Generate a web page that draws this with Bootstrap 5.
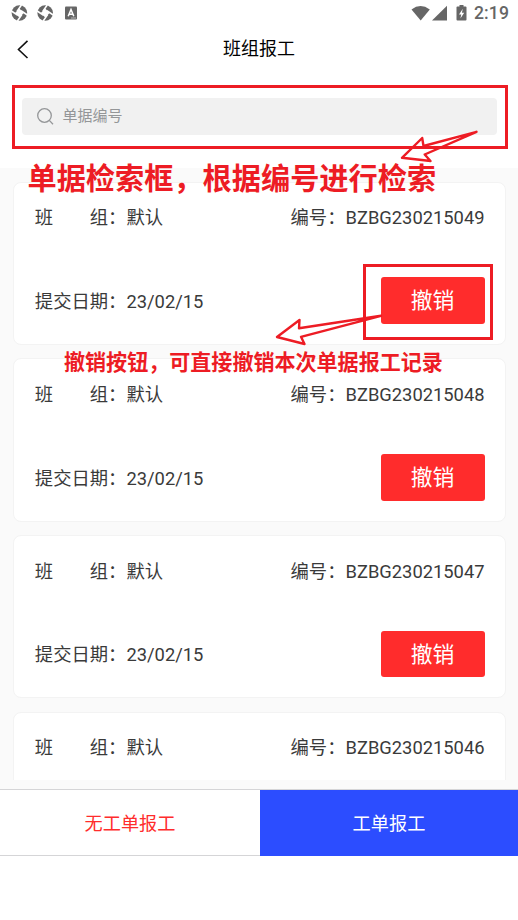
<!DOCTYPE html>
<html lang="zh-CN">
<head>
<meta charset="utf-8">
<meta name="viewport" content="width=device-width, initial-scale=1">
<title>班组报工</title>
<link href="https://cdn.jsdelivr.net/npm/bootstrap@5.3.0/dist/css/bootstrap.min.css" rel="stylesheet">
<style>
body { font-family: Roboto, "Noto Sans CJK SC", sans-serif; color: #3a3a3a; width: 518px; height: 920px; overflow: hidden; background: #fff; }
.status-row { height: 27px; padding: 0 9px 0 11px; color: #666; }
.clock { font-size: 17.6px; font-weight: 500; line-height: 27px; letter-spacing: .1px; }
.title-row { height: 43px; padding-left: 15.5px; }
.title-row h1 { font-size: 18px; font-weight: 400; color: #000; line-height: 45px; padding-right: 29.5px; }
.search-row { height: 98px; padding: 28px 21px 0 22px; }
.search-field { height: 37px; background: #f1f1f1; border-radius: 4px; padding-left: 14px; gap: 7.5px; color: #949698; font-size: 15px; line-height: 36px; }
.search-field span { padding-bottom: 2px; }
.list-area { height: 622px; background: #fafafa; padding: 13.5px 12px 0 13px; border-bottom: 1px solid #d5d5d7; }
.list-clip { height: 598.5px; overflow: hidden; }
.report-card { height: 163.3px; margin-bottom: 13.5px; border: 1px solid #f3f3f3; border-radius: 8px; padding: 21.5px 20.5px 20px 20.8px; font-size: 18.33px; line-height: 28px; }
.field-date { padding-bottom: 8px; }
.btn-revoke { width: 104px; height: 46.5px; background: #ff2c2c; color: #fff; border: 0; border-radius: 3px; font-size: 21.8px; line-height: 47px; padding: 0; }
.btn-revoke:hover { background: #e52020; color: #fff; }
.action-row { height: 66px; font-size: 18.2px; }
.action-row .btn { border-radius: 0; border: 0; font-size: inherit; padding: 2px 0 0; }
.btn-plain { width: 260px; color: #ff2c2c; box-shadow: inset 0 -1px #d5d5d7; }
.btn-order { background: #2c4dff; color: #fff; }
.note-layer { color: #ed1c24; pointer-events: none; }
.note { position: absolute; font-weight: 700; white-space: nowrap; line-height: 1; }
.note-search { left: 27.5px; top: 165px; font-size: 29.2px; }
.note-revoke { left: 64px; top: 352px; font-size: 21.05px; }
</style>
<script src="https://cdn.jsdelivr.net/npm/bootstrap@5.3.0/dist/js/bootstrap.bundle.min.js"></script>
</head>
<body class="position-relative">
<header>
  <div class="status-row d-flex align-items-center justify-content-between">
    <svg width="68" height="18" viewBox="0 0 68 18">
      <defs><g id="swirl"><circle cx="8" cy="8" r="7.8" fill="#666"/><path d="M8 3.6 12.4 8 8 12.4 3.6 8Z" fill="#fff"/><path d="M5.6 6.4 10 0M9.6 5.6 16 10M10.4 9.6 6 16M6.4 10.4 0 6" stroke="#fff" stroke-width="1.6" fill="none"/></g></defs>
      <use href="#swirl" x="0.4" y="0"/><use href="#swirl" x="26.2" y="0"/>
      <rect x="54" y="1.5" width="12" height="13" rx="1" fill="#666"/>
      <path d="M57.2 11.3 60 4.5 62.8 11.3M58.2 9.2H61.8" fill="none" stroke="#fff" stroke-width="1.5"/><path d="M60 13h5" stroke="#ccc" stroke-width=".8"/>
    </svg>
    <div class="d-flex align-items-center">
      <svg width="63" height="18" viewBox="0 0 63 18" fill="#666">
        <path d="M.5 4.4Q9.5-2.5 18.8 4.4L9.7 15.6Z"/><path d="M36 .8V15.5H21Z"/>
        <path d="M48.5 1.4V0h4v1.4h2.1q.9 0 .9.9v12.3q0 .9-.9.9h-8.2q-.9 0-.9-.9V2.3q0-.9.9-.9Z"/><path d="M51.8 3.7 48 9.5h2.3l-.9 4.1 3.8-5.8h-2.3Z" fill="#fff"/>
      </svg>
      <span class="clock">2:19</span>
    </div>
  </div>
  <div class="title-row d-flex align-items-center">
    <svg width="14" height="20" viewBox="0 0 14 20"><path d="M11.5 1.8 2.5 10.5 11.5 19" fill="none" stroke="#111" stroke-width="1.6"/></svg>
    <h1 class="flex-grow-1 text-center m-0">班组报工</h1>
  </div>
  <div class="search-row">
    <div class="search-field d-flex align-items-center">
      <svg width="19" height="19" viewBox="0 0 19 19" fill="none" stroke="#949698" stroke-width="1.3"><circle cx="8.5" cy="8.5" r="6.8"/><path d="m13.3 13.4 3.7 3.8"/></svg>
      <span>单据编号</span>
    </div>
  </div>
</header>
<main class="list-area">
  <div class="list-clip">
    <article class="report-card bg-white d-flex flex-column justify-content-between">
      <div class="d-flex justify-content-between"><span>班　　组：默认</span><span>编号：BZBG230215049</span></div>
      <div class="d-flex justify-content-between align-items-end"><span class="field-date">提交日期：23/02/15</span><button class="btn btn-revoke">撤销</button></div>
    </article>
    <article class="report-card bg-white d-flex flex-column justify-content-between">
      <div class="d-flex justify-content-between"><span>班　　组：默认</span><span>编号：BZBG230215048</span></div>
      <div class="d-flex justify-content-between align-items-end"><span class="field-date">提交日期：23/02/15</span><button class="btn btn-revoke">撤销</button></div>
    </article>
    <article class="report-card bg-white d-flex flex-column justify-content-between">
      <div class="d-flex justify-content-between"><span>班　　组：默认</span><span>编号：BZBG230215047</span></div>
      <div class="d-flex justify-content-between align-items-end"><span class="field-date">提交日期：23/02/15</span><button class="btn btn-revoke">撤销</button></div>
    </article>
    <article class="report-card bg-white">
      <div class="d-flex justify-content-between"><span>班　　组：默认</span><span>编号：BZBG230215046</span></div>
    </article>
  </div>
</main>
<footer class="action-row d-flex">
  <button class="btn btn-plain">无工单报工</button>
  <button class="btn btn-order flex-grow-1">工单报工</button>
</footer>
<div class="note-layer position-absolute top-0 start-0 w-100 h-100">
  <svg width="518" height="920" viewBox="0 0 518 920" fill="none" stroke="#ed1c24">
    <rect x="13.5" y="86.5" width="493" height="61" stroke-width="3"/>
    <rect x="364.5" y="265.5" width="127" height="73" stroke-width="3"/>
    <g stroke-width="2.4" stroke-linejoin="round">
      <path d="M476.5 131.8 423.5 146 422.2 138 402 157.8 430.5 161 424.7 154.5Z"/>
      <path d="M381 315.8 299 328.3 299.5 320 277 337 304.5 344 301 336.8Z"/>
    </g>
  </svg>
  <div class="note note-search">单据检索框，根据编号进行检索</div>
  <div class="note note-revoke">撤销按钮，可直接撤销本次单据报工记录</div>
</div>
</body>
</html>
